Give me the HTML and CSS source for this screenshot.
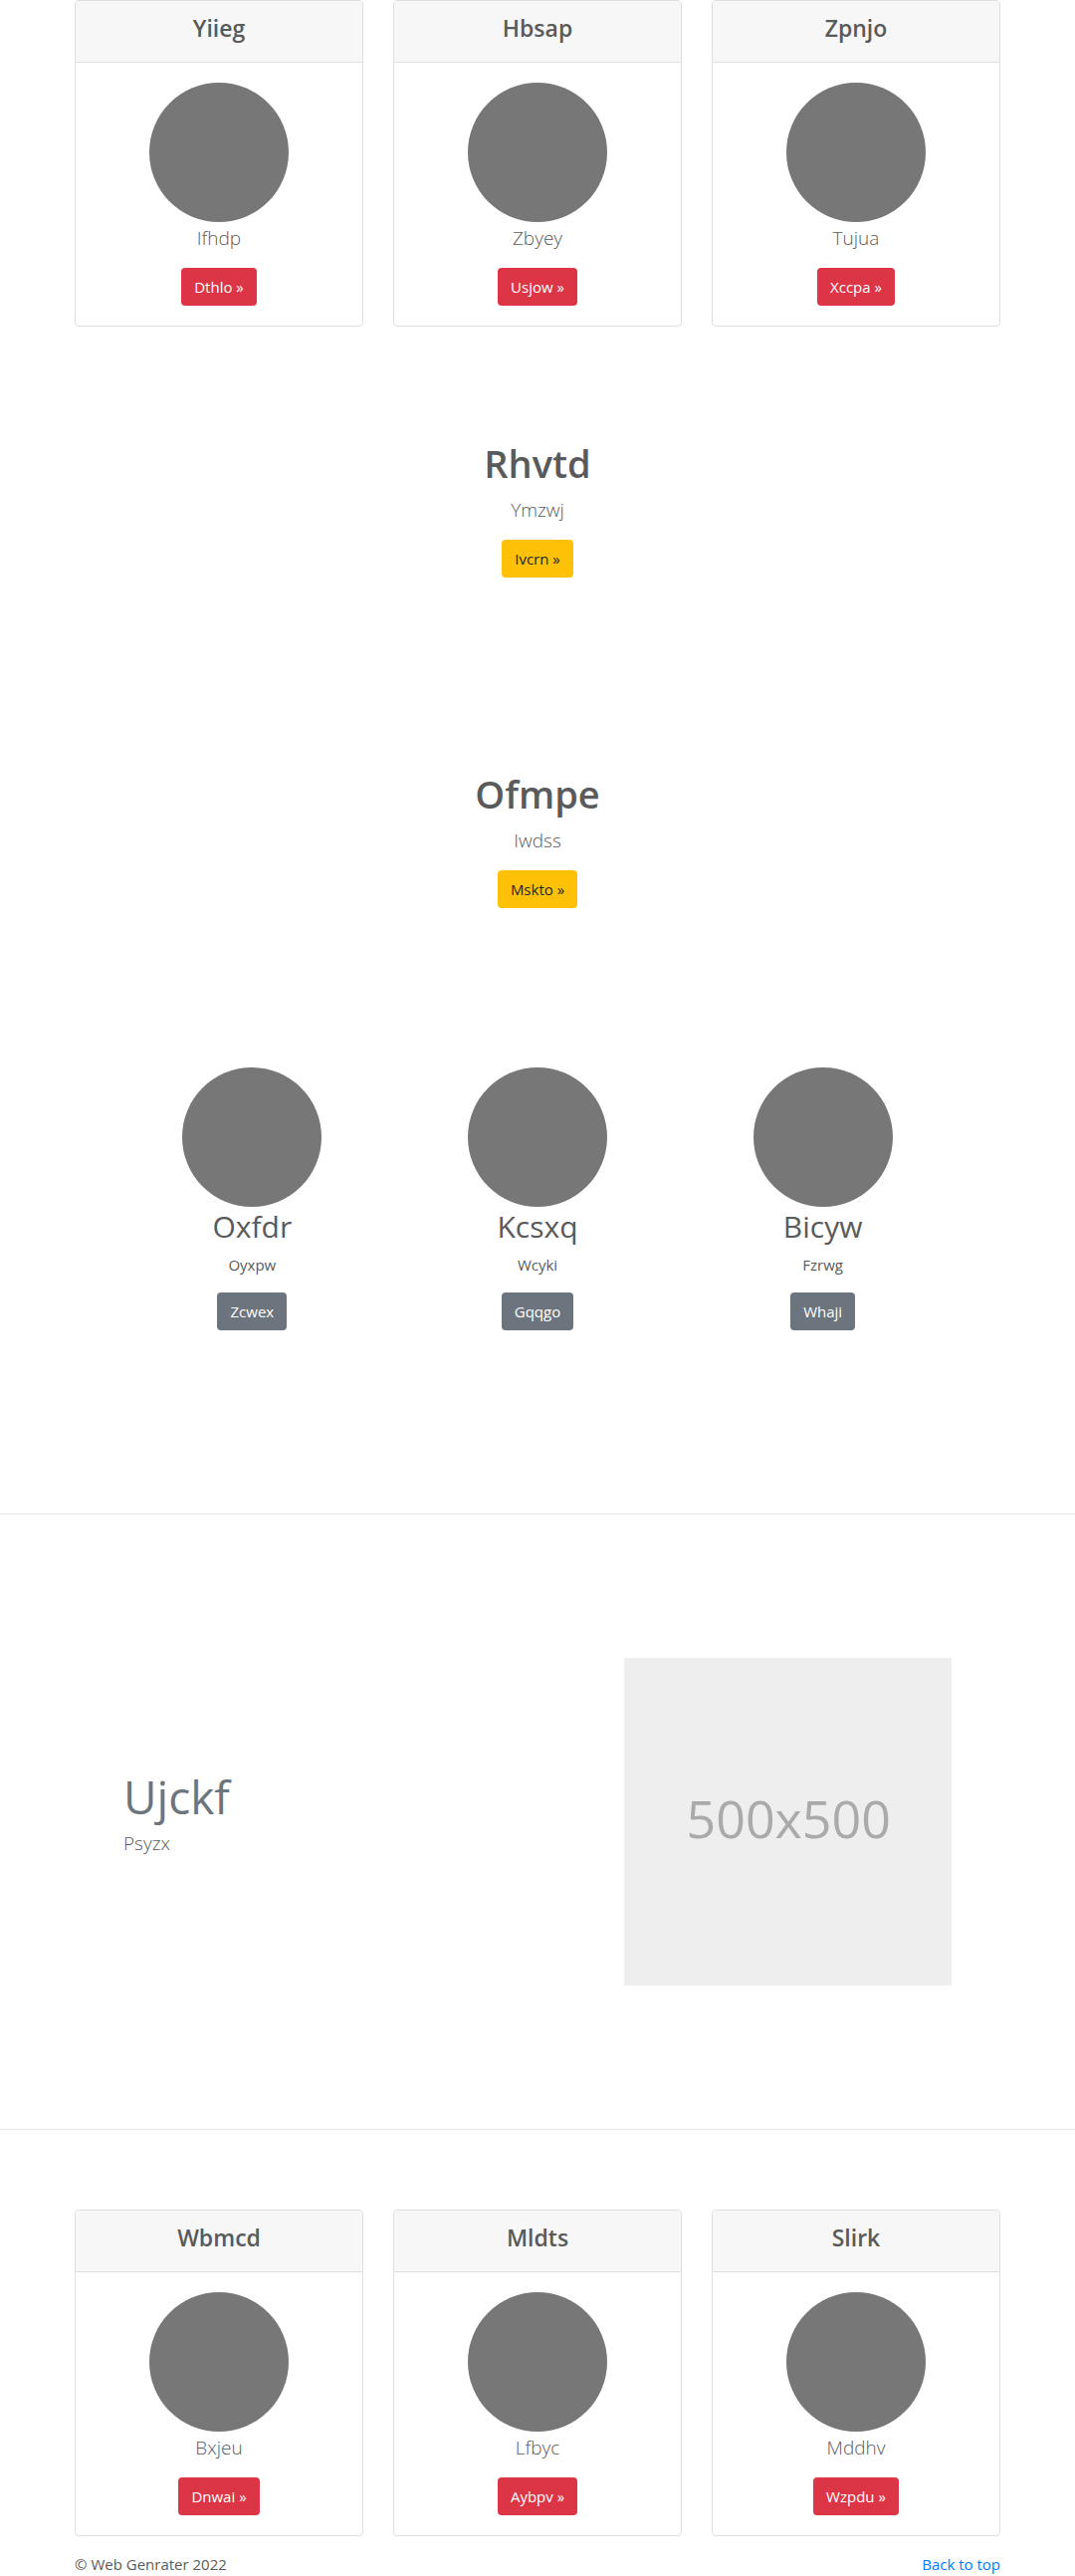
FILE: index.html
```html
<!DOCTYPE html>
<html lang="en">
<head>
<meta charset="utf-8">
<meta name="viewport" content="width=device-width, initial-scale=1">
<title>Web Genrater</title>
<link rel="stylesheet" href="styles.css">
</head>
<body>
<main>
  <section class="container card-row">
    <article class="card">
      <h4 class="card-header">Yiieg</h4>
      <div class="card-body">
        <span class="avatar"></span>
        <p class="lead">Ifhdp</p>
        <a class="btn btn-danger" href="#">Dthlo »</a>
      </div>
    </article>
    <article class="card">
      <h4 class="card-header">Hbsap</h4>
      <div class="card-body">
        <span class="avatar"></span>
        <p class="lead">Zbyey</p>
        <a class="btn btn-danger" href="#">Usjow »</a>
      </div>
    </article>
    <article class="card">
      <h4 class="card-header">Zpnjo</h4>
      <div class="card-body">
        <span class="avatar"></span>
        <p class="lead">Tujua</p>
        <a class="btn btn-danger" href="#">Xccpa »</a>
      </div>
    </article>
  </section>

  <section class="hero">
    <h1 class="hero-title">Rhvtd</h1>
    <p class="lead">Ymzwj</p>
    <a class="btn btn-warning" href="#">Ivcrn »</a>
  </section>

  <section class="hero">
    <h1 class="hero-title">Ofmpe</h1>
    <p class="lead">Iwdss</p>
    <a class="btn btn-warning" href="#">Mskto »</a>
  </section>

  <section class="profiles">
    <article class="profile">
      <span class="avatar"></span>
      <h2 class="profile-name">Oxfdr</h2>
      <p class="profile-text">Oyxpw</p>
      <a class="btn btn-secondary" href="#">Zcwex</a>
    </article>
    <article class="profile">
      <span class="avatar"></span>
      <h2 class="profile-name">Kcsxq</h2>
      <p class="profile-text">Wcyki</p>
      <a class="btn btn-secondary" href="#">Gqqgo</a>
    </article>
    <article class="profile">
      <span class="avatar"></span>
      <h2 class="profile-name">Bicyw</h2>
      <p class="profile-text">Fzrwg</p>
      <a class="btn btn-secondary" href="#">Whaji</a>
    </article>
  </section>

  <hr class="divider">

  <section class="feature">
    <div class="feature-text">
      <h2 class="feature-title">Ujckf</h2>
      <p class="lead">Psyzx</p>
    </div>
    <svg class="feature-image" viewBox="0 0 500 500" role="img" aria-label="500x500">
      <rect width="500" height="500" fill="#eee"/>
      <text x="251" y="275" text-anchor="middle" font-size="79" fill="#aaa">500x500</text>
    </svg>
  </section>

  <hr class="divider">

  <section class="container card-row">
    <article class="card">
      <h4 class="card-header">Wbmcd</h4>
      <div class="card-body">
        <span class="avatar"></span>
        <p class="lead">Bxjeu</p>
        <a class="btn btn-danger" href="#">Dnwai »</a>
      </div>
    </article>
    <article class="card">
      <h4 class="card-header">Mldts</h4>
      <div class="card-body">
        <span class="avatar"></span>
        <p class="lead">Lfbyc</p>
        <a class="btn btn-danger" href="#">Aybpv »</a>
      </div>
    </article>
    <article class="card">
      <h4 class="card-header">Slirk</h4>
      <div class="card-body">
        <span class="avatar"></span>
        <p class="lead">Mddhv</p>
        <a class="btn btn-danger" href="#">Wzpdu »</a>
      </div>
    </article>
  </section>
</main>
<footer class="container footer">
  <span>© Web Genrater 2022</span>
  <a class="footer-link" href="#">Back to top</a>
</footer>
</body>
</html>
```
FILE: styles.css
```css
*,
*::before,
*::after {
  box-sizing: border-box;
}

body {
  margin: 0;
  background: #fff;
  color: #5a5a5a;
  font-family: "Segoe UI", "Open Sans", "Noto Sans", sans-serif;
  font-size: 15px;
  line-height: 24px;
}

h1, h2, h4, p {
  margin: 0;
}

.container {
  width: 100%;
  max-width: 960px;
  margin: 0 auto;
  padding: 0 15px;
}

/* Cards */
.card-row {
  display: grid;
  grid-template-columns: repeat(3, 1fr);
  gap: 30px;
  padding-bottom: 16px;
}

.card {
  border: 1px solid #dfdfdf;
  border-radius: 4px;
  overflow: hidden;
  text-align: center;
}

.card-header {
  padding: 12px 20px 19px;
  background: #f7f7f7;
  border-bottom: 1px solid #dfdfdf;
  font-size: 23px;
  font-weight: 600;
  line-height: 30px;
}

.card-body,
.hero,
.profile {
  display: flex;
  flex-direction: column;
  align-items: center;
}

.card-body {
  padding: 20px;
}

.avatar {
  width: 140px;
  height: 140px;
  border-radius: 50%;
  background: #777;
}

.lead {
  margin-bottom: 14px;
  font-size: 19px;
  font-weight: 300;
  line-height: 32px;
}

/* Buttons */
.btn {
  padding: 7px 13px;
  border-radius: 4px;
  text-decoration: none;
}

.btn-danger {
  background: #dc3545;
  color: #fff;
}

.btn-warning {
  background: #ffc107;
  color: #212529;
}

.btn-secondary {
  background: #6c757d;
  color: #fff;
}

/* Centred call-outs */
.hero {
  padding: 96px 15px;
}

.hero-title {
  margin-bottom: 6px;
  font-size: 38px;
  font-weight: 600;
  line-height: 50px;
}

/* Profiles */
.profiles {
  display: grid;
  grid-template-columns: repeat(3, 1fr);
  max-width: 860px;
  margin: 0 auto;
  padding: 64px 0 104px;
}

.profile-name {
  margin-bottom: 6px;
  font-size: 30px;
  font-weight: 400;
  line-height: 40px;
}

.profile-text {
  margin-bottom: 16px;
}

.divider {
  margin: 80px 0;
  border: 0;
  border-top: 1px solid #e5e5e5;
}

/* Feature */
.feature {
  display: grid;
  grid-template-columns: 7fr 5fr;
  align-items: center;
  max-width: 862px;
  margin: 0 auto;
  padding: 64px 0;
}

.feature-text {
  padding: 0 15px;
}

.feature-title {
  margin-bottom: 6px;
  color: #6c757d;
  font-size: 46px;
  font-weight: 400;
  line-height: 50px;
}

.feature-image {
  display: block;
  width: calc(100% - 30px);
  margin: 0 15px;
}

/* Footer */
.footer {
  display: flex;
  justify-content: space-between;
}

.footer-link {
  color: #007bff;
  text-decoration: none;
}
```
